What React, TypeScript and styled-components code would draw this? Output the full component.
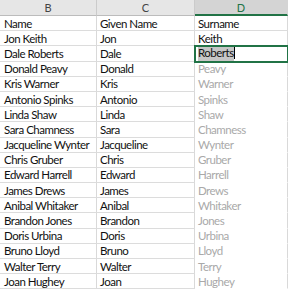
import React from 'react';
import styled, { createGlobalStyle } from 'styled-components';

const GlobalStyle = createGlobalStyle`
  html, body {
    margin: 0;
    padding: 0;
    background: #ffffff;
  }
  body {
    font-family: Lato, "Open Sans", sans-serif;
  }
`;

// name list: full name, given name, surname
const people: [string, string, string][] = [
  ['Name', 'Given Name', 'Surname'],
  ['Jon Keith', 'Jon', 'Keith'],
  ['Dale Roberts', 'Dale', 'Roberts'],
  ['Donald Peavy', 'Donald', 'Peavy'],
  ['Kris Warner', 'Kris', 'Warner'],
  ['Antonio Spinks', 'Antonio', 'Spinks'],
  ['Linda Shaw', 'Linda', 'Shaw'],
  ['Sara Chamness', 'Sara', 'Chamness'],
  ['Jacqueline Wynter', 'Jacqueline', 'Wynter'],
  ['Chris Gruber', 'Chris', 'Gruber'],
  ['Edward Harrell', 'Edward', 'Harrell'],
  ['James Drews', 'James', 'Drews'],
  ['Anibal Whitaker', 'Anibal', 'Whitaker'],
  ['Brandon Jones', 'Brandon', 'Jones'],
  ['Doris Urbina', 'Doris', 'Urbina'],
  ['Bruno Lloyd', 'Bruno', 'Lloyd'],
  ['Walter Terry', 'Walter', 'Terry'],
  ['Joan Hughey', 'Joan', 'Hughey'],
];

const EDIT_ROW = 2;

const Sheet = styled.div`
  display: grid;
  grid-template-columns: 97px 98px 1fr;
  grid-template-rows: 16px;
  grid-auto-rows: 15.2px;
  width: 288px;
  height: 296px;
  overflow: hidden;
  background: #ffffff;
`;

const ColHead = styled.div<{ $active?: boolean }>`
  display: flex;
  align-items: center;
  justify-content: center;
  box-sizing: border-box;
  background: ${(p) => (p.$active ? '#d4d4d4' : '#e6e6e6')};
  color: ${(p) => (p.$active ? '#217346' : '#444444')};
  border-right: 1px solid ${(p) => (p.$active ? '#d4d4d4' : '#cbcbcb')};
  border-bottom: ${(p) => (p.$active ? '2px solid #217346' : '1px solid #bcbcbc')};
  font-size: 11px;
`;

const Cell = styled.div<{ $ghost?: boolean; $bare?: boolean; $lead?: boolean }>`
  display: flex;
  align-items: center;
  box-sizing: border-box;
  padding-left: ${(p) => (p.$lead ? 4 : 3)}px;
  white-space: nowrap;
  overflow: hidden;
  font-size: 11.5px;
  letter-spacing: -0.5px;
  color: ${(p) => (p.$ghost ? '#a9a9a9' : '#111111')};
  border-right: 1px solid #d9d9d9;
  border-bottom: 1px solid ${(p) => (p.$bare ? 'transparent' : '#dcdcdc')};
`;

const EditCell = styled(Cell)`
  position: relative;
  z-index: 1;
  outline: 2px solid #217346;
  outline-offset: -1px;
  padding-left: 3px;
  overflow: visible;
`;

const Picked = styled.span`
  background: #c6c6c6;
  padding: 1px 0 2px;
`;

const Caret = styled.span`
  display: inline-block;
  width: 1px;
  height: 12px;
  background: #000000;
`;

export default function App() {
  return (
    <>
      <GlobalStyle />
      <Sheet>
        <ColHead>B</ColHead>
        <ColHead>C</ColHead>
        <ColHead $active>D</ColHead>
        {people.map(([full, given, sur], i) => (
          <React.Fragment key={full}>
            <Cell $lead>{full}</Cell>
            <Cell>{given}</Cell>
            {i === EDIT_ROW ? (
              <EditCell>
                <Picked>{sur}</Picked>
                <Caret />
              </EditCell>
            ) : (
              <Cell $ghost={i > EDIT_ROW} $bare={i > EDIT_ROW}>
                {sur}
              </Cell>
            )}
          </React.Fragment>
        ))}
      </Sheet>
    </>
  );
}
